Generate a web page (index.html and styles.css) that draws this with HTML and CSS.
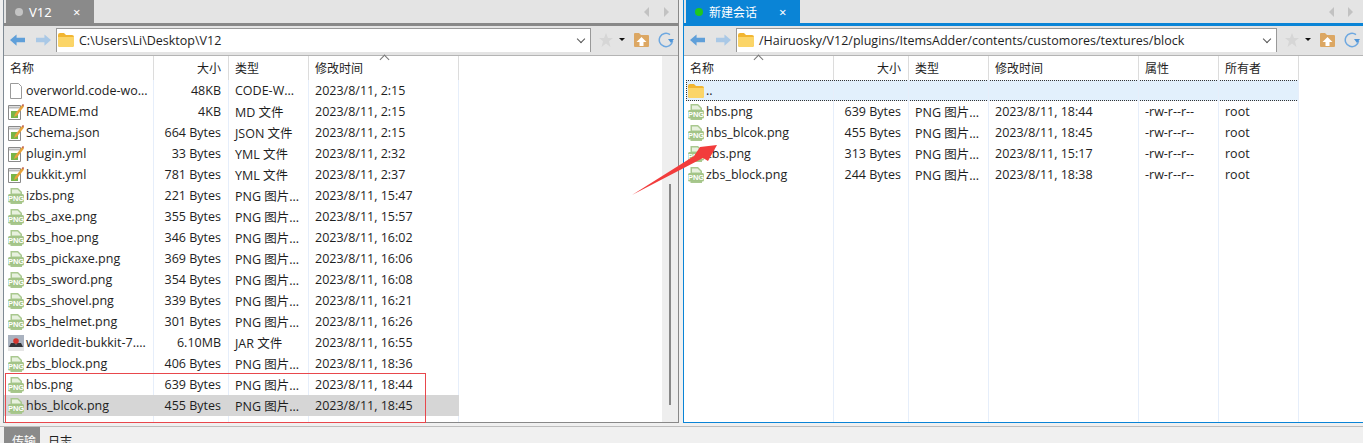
FILE: index.html
```html
<!DOCTYPE html>
<html lang="en">
<head>
    <meta charset="UTF-8">
    <title>FinalShell</title>
    <link rel="stylesheet" href="styles.css">
</head>
<body>
<svg class="defs" width="0" height="0">
    <symbol id="i-back" viewBox="0 0 16 14"><path d="M0 7 7 1v3.500h9v5H7V13z"/></symbol>
    <symbol id="i-folder" viewBox="0 0 16 14"><path d="M0 2q0-2 2-2h4l2 2h6q2 0 2 2v8q0 2-2 2H2q-2 0-2-2z" fill="#f2b632"/><path d="M0 4h16v8q0 2-2 2H2q-2 0-2-2z" fill="#fbd568"/></symbol>
    <symbol id="i-star" viewBox="0 0 14 14"><path d="m7 0 2 5h5l-4 3.200L11.500 14 7 10.500 2.500 14 4 8.200 0 5h5z" fill="#d6d6d6"/></symbol>
    <symbol id="i-up" viewBox="0 0 15 14"><path d="M0 1q0-1 1-1h4l2 2h7q1 0 1 1v10q0 1-1 1H1q-1 0-1-1z" fill="#dca763"/><path d="m7.500 4 5 5H9.500v4h-4V9h-3z" fill="#fff"/></symbol>
    <symbol id="i-refresh" viewBox="0 0 16 16"><path d="M12 2.600A6.700 6.700 0 1 0 14.600 9" fill="none" stroke="#6ea8e0" stroke-width="1.500"/><path d="M10 7h6l-3 4z" fill="#4d94d8"/></symbol>
    <symbol id="i-png" viewBox="0 0 16 16"><path d="M2.500 0H10l4 4v12H2.500z" fill="#a9c88f"/><path d="M4 1.500h5.500l3 3v1H4z" fill="#e8f1df"/><rect y="6" width="16" height="8.500" rx="1.500" fill="#a3c487"/><text x="8" y="13" class="png-label">PNG</text></symbol>
    <symbol id="i-blank" viewBox="0 0 16 16"><path d="M2.500.500h8l3 3v12h-11z" fill="#fff" stroke="#9a9a9a"/></symbol>
    <symbol id="i-note" viewBox="0 0 16 16"><path d="M.500 1.500h12v14H.500z" fill="#fff" stroke="#8a8a8a"/><path d="M1 2.500h11v2H1z" fill="#bbb"/><path d="M3 7h7v7H3z" fill="#79b547"/><path d="m6 13 1-3 7-9 2 1.500-7 9z" fill="#e8a33a"/><path d="m14 1 1-1 1 1-1 1.500z" fill="#b3402e"/></symbol>
    <symbol id="i-jar" viewBox="0 0 16 16"><rect width="16" height="16" fill="#aab2bf"/><path d="M0 12h16v4H0z" fill="#e6e6e6"/><path d="M3 8h10l2 4H1z" fill="#333337"/><path d="M7 4h2v6H7z" fill="#555"/><circle cx="8" cy="6" r="2.800" fill="#d5342c"/></symbol>
</svg>

<div class="panes">
    <section class="pane pane-local">
        <div class="tabbar">
            <div class="tab tab-off"><span class="dot"></span><span class="tab-name">V12</span><span class="tab-close">×</span></div>
            <div class="tab-nav"><span class="tri tri-left"></span><span class="tri tri-right"></span></div>
        </div>
        <div class="toolbar">
            <svg class="nav-btn"><use href="#i-back"/></svg>
            <svg class="nav-btn nav-next"><use href="#i-back"/></svg>
            <div class="address">
                <svg class="addr-folder"><use href="#i-folder"/></svg>
                <span class="addr-text">C:\Users\Li\Desktop\V12</span>
                <span class="chevron"></span>
            </div>
            <svg class="tool tool-star"><use href="#i-star"/></svg>
            <span class="caret"></span>
            <svg class="tool tool-up"><use href="#i-up"/></svg>
            <svg class="tool tool-refresh"><use href="#i-refresh"/></svg>
        </div>
        <div class="browser">
            <div class="list">
                <div class="row head">
                    <div class="c c-name">名称</div><div class="c c-size">大小</div><div class="c c-type">类型</div><div class="c c-date">修改时间<span class="sort sort-date"></span></div>
                </div>
                <div class="row"><div class="c c-name"><svg class="ficon"><use href="#i-blank"/></svg>overworld.code-wo...</div><div class="c c-size">48KB</div><div class="c c-type">CODE-W...</div><div class="c c-date">2023/8/11, 2:15</div></div>
                <div class="row"><div class="c c-name"><svg class="ficon"><use href="#i-note"/></svg>README.md</div><div class="c c-size">4KB</div><div class="c c-type">MD 文件</div><div class="c c-date">2023/8/11, 2:15</div></div>
                <div class="row"><div class="c c-name"><svg class="ficon"><use href="#i-note"/></svg>Schema.json</div><div class="c c-size">664 Bytes</div><div class="c c-type">JSON 文件</div><div class="c c-date">2023/8/11, 2:15</div></div>
                <div class="row"><div class="c c-name"><svg class="ficon"><use href="#i-note"/></svg>plugin.yml</div><div class="c c-size">33 Bytes</div><div class="c c-type">YML 文件</div><div class="c c-date">2023/8/11, 2:32</div></div>
                <div class="row"><div class="c c-name"><svg class="ficon"><use href="#i-note"/></svg>bukkit.yml</div><div class="c c-size">781 Bytes</div><div class="c c-type">YML 文件</div><div class="c c-date">2023/8/11, 2:37</div></div>
                <div class="row"><div class="c c-name"><svg class="ficon"><use href="#i-png"/></svg>izbs.png</div><div class="c c-size">221 Bytes</div><div class="c c-type">PNG 图片...</div><div class="c c-date">2023/8/11, 15:47</div></div>
                <div class="row"><div class="c c-name"><svg class="ficon"><use href="#i-png"/></svg>zbs_axe.png</div><div class="c c-size">355 Bytes</div><div class="c c-type">PNG 图片...</div><div class="c c-date">2023/8/11, 15:57</div></div>
                <div class="row"><div class="c c-name"><svg class="ficon"><use href="#i-png"/></svg>zbs_hoe.png</div><div class="c c-size">346 Bytes</div><div class="c c-type">PNG 图片...</div><div class="c c-date">2023/8/11, 16:02</div></div>
                <div class="row"><div class="c c-name"><svg class="ficon"><use href="#i-png"/></svg>zbs_pickaxe.png</div><div class="c c-size">369 Bytes</div><div class="c c-type">PNG 图片...</div><div class="c c-date">2023/8/11, 16:06</div></div>
                <div class="row"><div class="c c-name"><svg class="ficon"><use href="#i-png"/></svg>zbs_sword.png</div><div class="c c-size">354 Bytes</div><div class="c c-type">PNG 图片...</div><div class="c c-date">2023/8/11, 16:08</div></div>
                <div class="row"><div class="c c-name"><svg class="ficon"><use href="#i-png"/></svg>zbs_shovel.png</div><div class="c c-size">339 Bytes</div><div class="c c-type">PNG 图片...</div><div class="c c-date">2023/8/11, 16:21</div></div>
                <div class="row"><div class="c c-name"><svg class="ficon"><use href="#i-png"/></svg>zbs_helmet.png</div><div class="c c-size">301 Bytes</div><div class="c c-type">PNG 图片...</div><div class="c c-date">2023/8/11, 16:26</div></div>
                <div class="row"><div class="c c-name"><svg class="ficon"><use href="#i-jar"/></svg>worldedit-bukkit-7....</div><div class="c c-size">6.10MB</div><div class="c c-type">JAR 文件</div><div class="c c-date">2023/8/11, 16:55</div></div>
                <div class="row"><div class="c c-name"><svg class="ficon"><use href="#i-png"/></svg>zbs_block.png</div><div class="c c-size">406 Bytes</div><div class="c c-type">PNG 图片...</div><div class="c c-date">2023/8/11, 18:36</div></div>
                <div class="row"><div class="c c-name"><svg class="ficon"><use href="#i-png"/></svg>hbs.png</div><div class="c c-size">639 Bytes</div><div class="c c-type">PNG 图片...</div><div class="c c-date">2023/8/11, 18:44</div></div>
                <div class="row selected"><div class="c c-name"><svg class="ficon"><use href="#i-png"/></svg>hbs_blcok.png</div><div class="c c-size">455 Bytes</div><div class="c c-type">PNG 图片...</div><div class="c c-date">2023/8/11, 18:45</div></div>
                <div class="row filler"><div class="c c-name"></div><div class="c c-size"></div><div class="c c-type"></div><div class="c c-date"></div></div>
            </div>
            <div class="scrollbar"><span class="thumb"></span></div>
        </div>
    </section>

    <section class="pane pane-remote">
        <div class="tabbar">
            <div class="tab tab-on"><span class="dot"></span><span class="tab-name">新建会话</span><span class="tab-close">×</span></div>
            <div class="tab-nav"><span class="tri tri-left"></span><span class="tri tri-right"></span></div>
        </div>
        <div class="toolbar">
            <svg class="nav-btn"><use href="#i-back"/></svg>
            <svg class="nav-btn nav-next"><use href="#i-back"/></svg>
            <div class="address">
                <svg class="addr-folder"><use href="#i-folder"/></svg>
                <span class="addr-text">/Hairuosky/V12/plugins/ItemsAdder/contents/customores/textures/block</span>
                <span class="chevron"></span>
            </div>
            <svg class="tool tool-star"><use href="#i-star"/></svg>
            <span class="caret"></span>
            <svg class="tool tool-up"><use href="#i-up"/></svg>
            <svg class="tool tool-refresh"><use href="#i-refresh"/></svg>
        </div>
        <div class="browser">
            <div class="list">
                <div class="row head">
                    <div class="c c-name">名称<span class="sort sort-name"></span></div><div class="c c-size">大小</div><div class="c c-type">类型</div><div class="c c-date">修改时间</div><div class="c c-attr">属性</div><div class="c c-owner">所有者</div>
                </div>
                <div class="row parent"><div class="c c-name"><svg class="ficon"><use href="#i-folder"/></svg>..</div><div class="c c-size"></div><div class="c c-type"></div><div class="c c-date"></div><div class="c c-attr"></div><div class="c c-owner"></div></div>
                <div class="row"><div class="c c-name"><svg class="ficon"><use href="#i-png"/></svg>hbs.png</div><div class="c c-size">639 Bytes</div><div class="c c-type">PNG 图片...</div><div class="c c-date">2023/8/11, 18:44</div><div class="c c-attr">-rw-r--r--</div><div class="c c-owner">root</div></div>
                <div class="row"><div class="c c-name"><svg class="ficon"><use href="#i-png"/></svg>hbs_blcok.png</div><div class="c c-size">455 Bytes</div><div class="c c-type">PNG 图片...</div><div class="c c-date">2023/8/11, 18:45</div><div class="c c-attr">-rw-r--r--</div><div class="c c-owner">root</div></div>
                <div class="row"><div class="c c-name"><svg class="ficon"><use href="#i-png"/></svg>zbs.png</div><div class="c c-size">313 Bytes</div><div class="c c-type">PNG 图片...</div><div class="c c-date">2023/8/11, 15:17</div><div class="c c-attr">-rw-r--r--</div><div class="c c-owner">root</div></div>
                <div class="row"><div class="c c-name"><svg class="ficon"><use href="#i-png"/></svg>zbs_block.png</div><div class="c c-size">244 Bytes</div><div class="c c-type">PNG 图片...</div><div class="c c-date">2023/8/11, 18:38</div><div class="c c-attr">-rw-r--r--</div><div class="c c-owner">root</div></div>
                <div class="row filler"><div class="c c-name"></div><div class="c c-size"></div><div class="c c-type"></div><div class="c c-date"></div><div class="c c-attr"></div><div class="c c-owner"></div></div>
            </div>
        </div>
    </section>
</div>

<div class="bottom-tabs">
    <div class="btab btab-on">传输</div>
    <div class="btab">日志</div>
</div>

<!-- red marks drawn over the screenshot -->
<div class="mark-box"></div>
<svg class="mark-arrow" width="1363" height="443"><polygon points="632,195 694,156 700,147 717,145 708,161 703,158"/></svg>
</body>
</html>
```
FILE: styles.css
```css
* {
    box-sizing: border-box;
}

html, body {
    height: 443px;
    overflow: hidden;
}

body {
    margin: 0;
    position: relative;
    background-color: #f0f0f0;
    color: #1e1e1e;
    font-family: "Open Sans", "Noto Sans CJK SC", sans-serif;
    font-size: 12.5px;
}

.defs {
    position: absolute;
}

.png-label {
    font-family: "Liberation Sans", sans-serif;
    font-size: 7.5px;
    font-weight: bold;
    fill: #fff;
    text-anchor: middle;
}

.panes {
    display: flex;
    height: 423px;
    padding-left: 3px;
    gap: 4px;
}

.pane {
    display: flex;
    flex-direction: column;
    border-left: 1px solid #7f8a94;
    border-bottom: 1px solid #888;
}

.pane-local {
    width: 676px;
    border-right: 1px solid #888;
}

.pane-remote {
    flex: 1;
    border-left-color: #0a84d6;
    border-bottom-color: #0a84d6;
}

/* tabs */
.tabbar {
    display: flex;
    justify-content: space-between;
    height: 23px;
    flex-shrink: 0;
    padding-left: 2px;
    background-color: #e4e4e4;
}

.tab {
    display: flex;
    align-items: center;
    color: #fff;
    font-family: "Noto Sans", "Noto Sans CJK SC", sans-serif;
}

.tab-off {
    width: 88px;
    padding-left: 9px;
    background-color: #8a8a8a;
    font-size: 13px;
}

.tab-on {
    width: 114px;
    padding-left: 9px;
    background-color: #0a84d6;
    font-size: 12px;
}

.dot {
    width: 8px;
    height: 8px;
    margin-right: 6px;
    border-radius: 50%;
    background-color: #c4c4c4;
}

.tab-on .dot {
    background-color: #1fc71f;
}

.tab-name {
    flex: 1;
}

.tab-close {
    width: 21px;
    font-size: 13px;
}

.tab-nav {
    display: flex;
    align-items: center;
    gap: 15px;
    padding-right: 9px;
}

.pane-remote .tab-nav {
    gap: 14px;
    padding-right: 10px;
}

.tri {
    width: 0;
    height: 0;
    border-top: 5px solid transparent;
    border-bottom: 5px solid transparent;
}

.tri-left {
    border-right: 5px solid #c2c2c2;
}

.tri-right {
    border-left: 5px solid #c2c2c2;
}

/* path bar */
.toolbar {
    display: flex;
    align-items: center;
    height: 33px;
    flex-shrink: 0;
    padding: 2px 0 4px 6px;
    background-color: #e4e4e4;
    border-top: 3px solid #888;
    border-bottom: 1px solid #b4b4b4;
}

.pane-remote .toolbar {
    border-top-color: #0a84d6;
}

.nav-btn {
    width: 15px;
    height: 14px;
    margin-right: 11px;
    fill: #5f9fd9;
}

.nav-next {
    margin-right: 5px;
    fill: #a9c8e6;
    transform: scaleX(-1);
}

.address {
    display: flex;
    align-items: center;
    width: 535px;
    height: 24px;
    padding-left: 1px;
    background-color: #fff;
    border-left: 1px solid #999;
    border-top: 1px solid #999;
    border-right: 1px solid #999;
}

.pane-remote .address {
    width: 541px;
}

.addr-folder {
    width: 16px;
    height: 14px;
    margin-right: 5px;
}

.addr-text {
    flex: 1;
    font-size: 12.5px;
}

.chevron {
    width: 6px;
    height: 6px;
    margin: 0 6px 3px 0;
    border-right: 1px solid #555;
    border-bottom: 1px solid #555;
    transform: rotate(45deg);
}

.tool {
    flex-shrink: 0;
}

.tool-star {
    width: 14px;
    height: 14px;
    margin-left: 8px;
}

.caret {
    width: 0;
    height: 0;
    margin-left: 6px;
    border-top: 3px solid #111;
    border-left: 3px solid transparent;
    border-right: 3px solid transparent;
}

.tool-up {
    width: 15px;
    height: 14px;
    margin-left: 9px;
}

.tool-refresh {
    width: 16px;
    height: 16px;
    margin-left: 9px;
}

/* file list */
.browser {
    display: flex;
    flex: 1;
    min-height: 0;
    background-color: #fff;
}

.list {
    display: flex;
    flex-direction: column;
    flex: 1;
}

.row {
    display: flex;
    height: 21px;
    flex-shrink: 0;
}

.row.head {
    height: 24px;
}

.row.filler {
    flex: 1;
}

.row.selected {
    width: 455px;
    background-color: #d6d6d6;
}

.row.parent {
    position: relative;
    width: 613px;
    margin-left: 2px;
    background-color: #e2f0fc;
    outline: 1px dotted #333;
    outline-offset: -1px;
}

.parent .c-name {
    width: 148px;
    padding-left: 2px;
}

.c {
    display: flex;
    align-items: center;
    position: relative;
    white-space: nowrap;
    overflow: hidden;
    border-right: 1px solid #e6eefa;
}

.head .c {
    overflow: visible;
    border-right-color: #dcdcdc;
    font-size: 12px;
}

.selected .c {
    border-right-color: #d6d6d6;
}

.c-name {
    width: 150px;
    padding-left: 4px;
}

.head .c-name {
    padding-left: 6px;
}

.c-size {
    width: 75px;
    justify-content: flex-end;
    padding-right: 7px;
}

.c-type {
    width: 80px;
    padding-left: 6px;
}

.c-date {
    width: 150px;
    padding-left: 6px;
}

.c-attr {
    width: 80px;
    padding-left: 6px;
}

.c-owner {
    width: 80px;
    padding-left: 6px;
}

.ficon {
    width: 16px;
    height: 16px;
    margin-right: 2px;
    flex-shrink: 0;
}

.sort {
    position: absolute;
    top: 0;
    width: 7px;
    height: 7px;
    border-left: 1px solid #777;
    border-top: 1px solid #777;
    transform: rotate(45deg);
}

.sort-date {
    left: 72px;
}

.sort-name {
    left: 71px;
}

.scrollbar {
    width: 16px;
    flex-shrink: 0;
    padding: 128px 0 0 7px;
    background-color: #eee;
}

.thumb {
    display: block;
    width: 2px;
    height: 221px;
    background-color: #888;
}

/* bottom */
.bottom-tabs {
    display: flex;
    height: 17px;
    margin: 3px 0 0 0;
    padding-left: 4px;
    border-top: 1px solid #bdbdbd;
    font-size: 12px;
}

.btab {
    width: 36px;
    padding: 5px 0 0 8px;
    white-space: nowrap;
}

.btab-on {
    background-color: #8a8a8a;
    color: #fff;
}

/* annotation */
.mark-box {
    position: absolute;
    left: 5px;
    top: 373px;
    width: 421px;
    height: 50px;
    border: 1px solid #e8474c;
}

.mark-arrow {
    position: absolute;
    left: 0;
    top: 0;
    fill: #f23c3c;
}
```
